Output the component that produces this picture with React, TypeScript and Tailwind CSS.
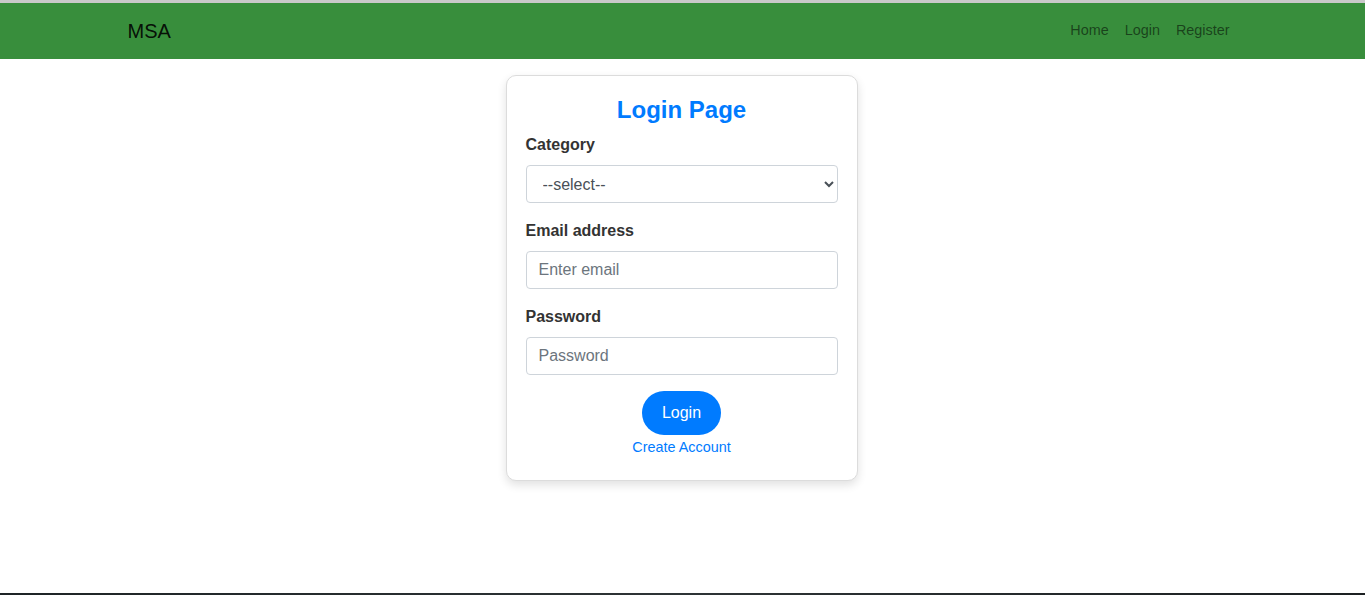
import React, { useState } from "react";

const font = { fontFamily: '"Liberation Sans", Arial, sans-serif' };

const App = () => {
  const [category, setCategory] = useState("");
  const [email, setEmail] = useState("");
  const [password, setPassword] = useState("");

  return (
    <div
      className="h-screen flex flex-col bg-white text-[#212529]"
      style={font}
    >
      <div className="h-[3px] bg-[#c9c9c9]" />

      {/* navbar */}
      <nav className="h-[56px] bg-[#388e3c] flex items-center">
        <div className="w-[1140px] mx-auto px-[15px] flex items-center justify-between">
          <a href="#" className="text-[20px] leading-[30px] text-black/90">
            MSA
          </a>
          <ul className="flex items-center text-[14.4px] text-black/55">
            <li>
              <a href="#" className="px-2 py-2 block">
                Home
              </a>
            </li>
            <li>
              <a href="#" className="px-2 py-2 block">
                Login
              </a>
            </li>
            <li>
              <a href="#" className="px-2 py-2 block">
                Register
              </a>
            </li>
          </ul>
        </div>
      </nav>

      <main className="flex-1 flex justify-center pt-[16px] pr-[2px]">
        <div className="w-[352px] h-fit bg-white border border-[#dcdcdc] rounded-[10px] shadow-[0_4px_10px_rgba(0,0,0,0.12)] p-[19px] pb-[22px]">
          <h4 className="text-center text-[24px] leading-[29px] font-bold text-[#007bff] mb-[9px]">
            Login Page
          </h4>
          <form onSubmit={(e) => e.preventDefault()}>
            <div className="mb-4">
              <label className="block font-bold text-[16px] leading-6 mb-2 text-[#333]">
                Category
              </label>
              <select
                value={category}
                onChange={(e) => setCategory(e.target.value)}
                className="w-full h-[38px] px-3 text-[16px] text-[#495057] bg-white border border-[#ced4da] rounded-[4px]"
                style={font}
              >
                <option value="">--select--</option>
                <option value="user">User</option>
                <option value="admin">Admin</option>
              </select>
            </div>
            <div className="mb-4">
              <label className="block font-bold text-[16px] leading-6 mb-2 text-[#333]">
                Email address
              </label>
              <input
                type="email"
                value={email}
                onChange={(e) => setEmail(e.target.value)}
                placeholder="Enter email"
                className="w-full h-[38px] px-3 text-[16px] text-[#495057] placeholder:text-[#6c757d] bg-white border border-[#ced4da] rounded-[4px] outline-none"
              />
            </div>
            <div className="mb-4">
              <label className="block font-bold text-[16px] leading-6 mb-2 text-[#333]">
                Password
              </label>
              <input
                type="password"
                value={password}
                onChange={(e) => setPassword(e.target.value)}
                placeholder="Password"
                className="w-full h-[38px] px-3 text-[16px] text-[#495057] placeholder:text-[#6c757d] bg-white border border-[#ced4da] rounded-[4px] outline-none"
              />
            </div>
            <div className="flex flex-col items-center">
              <button
                type="submit"
                className="h-[44px] px-5 rounded-full bg-[#007bff] text-white text-[16px]"
              >
                Login
              </button>
              <a
                href="#"
                className="text-[14.4px] leading-[22px] text-[#007bff] mt-px"
              >
                Create Account
              </a>
            </div>
          </form>
        </div>
      </main>

      <div className="h-[2px] bg-gradient-to-r from-[#1e2426] via-[#2e3436] to-[#1c2022]" />
    </div>
  );
};

export default App;
